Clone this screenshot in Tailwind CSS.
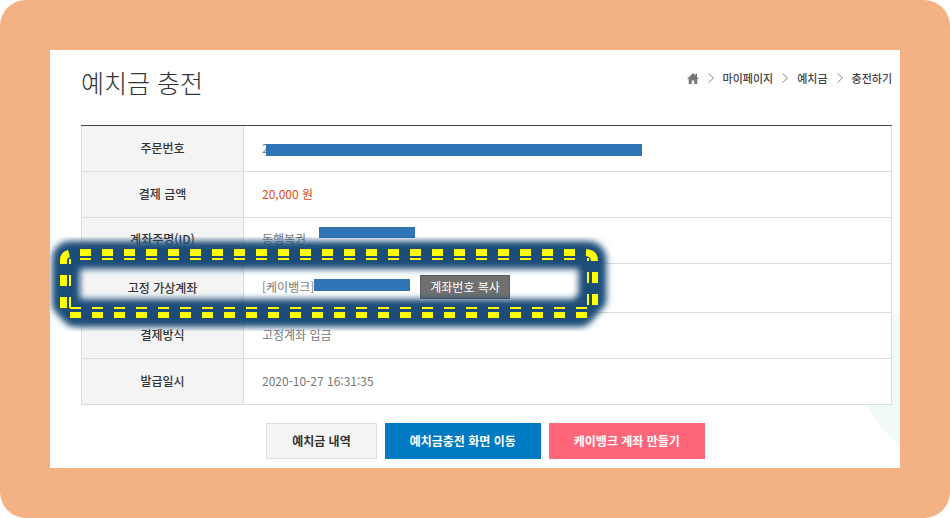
<!DOCTYPE html>
<html lang="ko">
<head>
    <meta charset="UTF-8">
    <meta name="viewport" content="width=device-width, initial-scale=1.0">
    <title>예치금 충전</title>
    <script src="https://cdn.jsdelivr.net/npm/@tailwindcss/browser@4"></script>
</head>
<body class="bg-white font-['Noto_Sans_CJK_KR',sans-serif] text-xs text-[#333]">
    <div class="flex min-h-screen flex-col rounded-[26px] bg-[#f4b183] p-[50px]">
        <main class="relative flex-1 overflow-hidden bg-white pl-[31px] pr-2 pt-3">
            <!-- Background shape -->
            <svg class="absolute right-0 bottom-0 h-[160px] w-[80px]" viewBox="0 0 80 160" aria-hidden="true">
                <path d="M40 10 Q64 6 80 6 V137 Q60 121 45 96 Z" fill="#f1faf9"/>
            </svg>

            <header class="flex items-start justify-between">
                <h1 class="text-[25px] leading-10 font-light">예치금 충전</h1>
                <nav class="flex h-8 items-center gap-[9px] text-[11px] font-medium text-[#444]" aria-label="현재 위치">
                    <a href="#" aria-label="홈">
                        <svg class="h-[11px] w-3" viewBox="0 0 12 11" fill="#777">
                            <path d="M6 0 L12 6 H10.3 V11 H7.2 V7.5 H4.8 V11 H1.7 V6 H0 Z M8.5 .5 H10 V4 H8.5 Z"/>
                        </svg>
                    </a>
                    <svg class="h-2.5 w-1.5" viewBox="0 0 6 10" fill="none" stroke="#888"><path d="M.5 .5 L5.5 5 L.5 9.5"/></svg>
                    <a href="#">마이페이지</a>
                    <svg class="h-2.5 w-1.5" viewBox="0 0 6 10" fill="none" stroke="#888"><path d="M.5 .5 L5.5 5 L.5 9.5"/></svg>
                    <a href="#">예치금</a>
                    <svg class="h-2.5 w-1.5" viewBox="0 0 6 10" fill="none" stroke="#888"><path d="M.5 .5 L5.5 5 L.5 9.5"/></svg>
                    <a href="#">충전하기</a>
                </nav>
            </header>

            <div class="relative mt-[23px] border-t border-[#444]">
                <table class="w-full border-collapse border border-t-0 border-[#ddd] bg-white text-[#777]">
                    <tbody>
                        <tr class="h-[45px] border-b border-[#ddd]">
                            <th scope="row" class="w-1/5 border-r border-[#ddd] bg-[#f4f4f4] font-medium text-[#333]">주문번호</th>
                            <td class="pl-[18px]">
                                <div class="relative flex items-center">2<span class="absolute left-1 mt-1 h-3 w-[376px] bg-[#2e75b6]"></span></div>
                            </td>
                        </tr>
                        <tr class="h-[46px] border-b border-[#ddd]">
                            <th scope="row" class="border-r border-[#ddd] bg-[#f4f4f4] font-medium text-[#333]">결제 금액</th>
                            <td class="pl-[18px] text-[#e04a20]">20,000 원</td>
                        </tr>
                        <tr class="h-[46px] border-b border-[#ddd]">
                            <th scope="row" class="border-r border-[#ddd] bg-[#f4f4f4] pb-0.5 font-medium text-[#333]">계좌주명(ID)</th>
                            <td class="pb-0.5 pl-[18px]">
                                <div class="relative">동행복권_<span class="absolute -top-1 left-[57px] h-[11px] w-24 bg-[#2e75b6]"></span></div>
                            </td>
                        </tr>
                        <tr class="h-[49px] border-b border-[#ddd]">
                            <th scope="row" class="border-r border-[#ddd] bg-[#f4f4f4] font-medium text-[#333]">고정 가상계좌</th>
                            <td class="pb-0.5 pl-[18px]">
                                <div class="flex items-center">
                                    <span>[케이뱅크]</span>
                                    <span class="mb-1 h-3 w-24 bg-[#2e75b6]"></span>
                                    <button type="button" class="ml-2.5 h-6 border border-[#5c5c5c] bg-[#707070] px-[9px] text-white">계좌번호 복사</button>
                                </div>
                            </td>
                        </tr>
                        <tr class="h-[46px] border-b border-[#ddd]">
                            <th scope="row" class="border-r border-[#ddd] bg-[#f4f4f4] font-medium text-[#333]">결제방식</th>
                            <td class="pl-[18px]">고정계좌 입금</td>
                        </tr>
                        <tr class="h-[46px]">
                            <th scope="row" class="border-r border-[#ddd] bg-[#f4f4f4] font-medium text-[#333]">발급일시</th>
                            <td class="pl-[18px]">2020-10-27 16:31:35</td>
                        </tr>
                    </tbody>
                </table>
            </div>

            <div class="relative mt-[18px] flex justify-center gap-2 pr-0.5 font-bold">
                <button type="button" class="h-9 border border-[#ddd] bg-[#f4f4f4] px-[25px]">예치금 내역</button>
                <button type="button" class="h-9 bg-[#007ac3] px-[25px] text-white">예치금충전 화면 이동</button>
                <button type="button" class="h-9 bg-[#ff667a] px-[25px] text-white">케이뱅크 계좌 만들기</button>
            </div>

            <!-- Highlight round the account row -->
            <svg class="pointer-events-none absolute top-[180px] -left-1 z-10 h-[110px] w-[580px]" viewBox="46 230 580 110" aria-hidden="true">
                <defs>
                    <filter id="glow" x="-10%" y="-30%" width="120%" height="160%"><feGaussianBlur stdDeviation="3"/></filter>
                </defs>
                <path d="M580 313 H75 L66 303 V260 Q66 255 71 255 H587 Q592.5 255 592.5 260 V299 Z" fill="none" stroke="#1f4e79" stroke-width="28" stroke-linejoin="round" filter="url(#glow)"/>
                <g fill="none" stroke="#ffff00">
                    <path d="M80 252.5 H580" stroke-width="7" stroke-dasharray="11 11"/>
                    <path d="M80 259 H580" stroke-width="2" stroke-dasharray="11 11"/>
                    <path d="M70 315 H587" stroke-width="6" stroke-dasharray="11 11"/>
                    <path d="M70 308 H587" stroke-width="2" stroke-dasharray="11 11"/>
                    <path d="M63.5 275 V308" stroke-width="7" stroke-dasharray="11 11"/>
                    <path d="M70 275 V308" stroke-width="2" stroke-dasharray="11 11"/>
                    <path d="M595 272 V305" stroke-width="6" stroke-dasharray="11 11"/>
                    <path d="M588 272 V305" stroke-width="2" stroke-dasharray="11 11"/>
                    <path d="M63.5 264 V260 Q63.5 255 69 253.5" stroke-width="7"/>
                    <path d="M70 264 V259" stroke-width="2"/>
                    <path d="M586 252.5 Q594.5 253 594.5 261" stroke-width="7"/>
                    <path d="M588 261 V258" stroke-width="2"/>
                </g>
            </svg>
        </main>
    </div>
</body>
</html>
